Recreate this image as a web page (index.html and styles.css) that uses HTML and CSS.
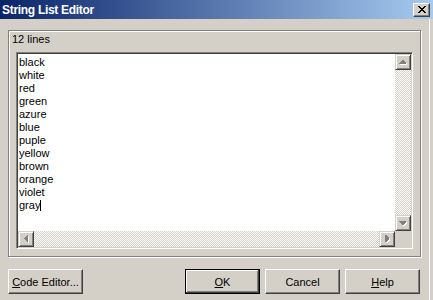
FILE: index.html
```html
<!DOCTYPE html>
<html lang="en">
<head>
  <meta charset="UTF-8">
  <title>String List Editor</title>
  <link rel="stylesheet" href="styles.css">
</head>
<body>
  <div class="window">
    <div class="titlebar">
      <span class="title">String List Editor</span>
      <button class="close" aria-label="Close">
        <svg width="8" height="7" viewBox="0 0 8 7" shape-rendering="crispEdges">
          <path d="M0 0h2l2 2.5 2-2.5h2l-3 3.5 3 3.5h-2l-2-2.5-2 2.5h-2l3-3.5z" fill="#000"/>
        </svg>
      </button>
    </div>

    <div class="client">
      <div class="group">
        <div class="count">12 lines</div>
        <div class="memo">
          <div class="lines">black<br>white<br>red<br>green<br>azure<br>blue<br>puple<br>yellow<br>brown<br>orange<br>violet<br>gray<span class="caret"></span></div>

          <div class="vscroll">
            <div class="sb-btn">
              <svg width="8" height="5" viewBox="0 0 8 5" shape-rendering="crispEdges">
                <path d="M4 1h1l3 3v1h-7v-1z" fill="#fff"/>
                <path d="M3 0h1l3 3v1h-7v-1z" fill="#808080"/>
              </svg>
            </div>
            <div class="track"></div>
            <div class="sb-btn">
              <svg width="8" height="5" viewBox="0 0 8 5" shape-rendering="crispEdges">
                <path d="M1 1h7v1l-3 3h-1l-3-3z" fill="#fff"/>
                <path d="M0 0h7v1l-3 3h-1l-3-3z" fill="#808080"/>
              </svg>
            </div>
          </div>

          <div class="hscroll">
            <div class="sb-btn">
              <svg width="5" height="8" viewBox="0 0 5 8" shape-rendering="crispEdges">
                <path d="M4 1h1v7h-1l-3-3v-1z" fill="#fff"/>
                <path d="M3 0h1v7h-1l-3-3v-1z" fill="#808080"/>
              </svg>
            </div>
            <div class="track"></div>
            <div class="sb-btn">
              <svg width="5" height="8" viewBox="0 0 5 8" shape-rendering="crispEdges">
                <path d="M1 1h1l3 3v1l-3 3h-1z" fill="#fff"/>
                <path d="M0 0h1l3 3v1l-3 3h-1z" fill="#808080"/>
              </svg>
            </div>
          </div>

          <div class="corner"></div>
        </div>
      </div>

      <div class="buttons">
        <button class="btn"><u>C</u>ode Editor...</button>
        <div class="spacer"></div>
        <button class="btn default"><u>O</u>K</button>
        <button class="btn">Cancel</button>
        <button class="btn"><u>H</u>elp</button>
      </div>
    </div>
  </div>
</body>
</html>
```

FILE: styles.css
```css
* {
  margin: 0;
  padding: 0;
  box-sizing: border-box;
}
body {
  background: #d4d0c8;
  font-family: "Liberation Sans", Arial, sans-serif;
  font-size: 11px;
  color: #000;
  overflow: hidden;
}
.window {
  width: 433px;
  height: 300px;
  background: #d4d0c8;
  display: flex;
  flex-direction: column;
}
.titlebar {
  height: 19px;
  background: linear-gradient(90deg, #0a246a, #a6caf0);
  display: flex;
  align-items: center;
  justify-content: space-between;
  padding: 0 3px 0 2px;
}
.title {
  color: #fff;
  font-weight: bold;
  font-size: 12px;
  letter-spacing: -0.3px;
  line-height: 14px;
}
.close {
  width: 17px;
  height: 14px;
  background: #d4d0c8;
  border: 1px solid;
  border-color: #fff #404040 #404040 #fff;
  box-shadow: inset -1px -1px #808080;
  display: flex;
  align-items: center;
  justify-content: center;
}
.close svg {
  display: block;
}
.client {
  flex: 1;
  padding: 11px 0 0 8px;
  border-right: 1px solid #fff;
  margin-right: 3px;
}
.group {
  width: 413px;
  height: 227px;
  border: 1px solid #808080;
  box-shadow: inset 1px 1px #fff, 1px 1px #fff;
  padding: 2px 7px 7px 7px;
}
.count {
  line-height: 13px;
  height: 13px;
  margin: 0 0 6px -4px;
}
.memo {
  width: 397px;
  height: 197px;
  border: 1px solid;
  border-color: #808080 #fff #fff #808080;
  box-shadow: inset 1px 1px #404040, inset -1px -1px #d4d0c8;
  padding: 1px;
  background: #fff;
  display: grid;
  grid-template-columns: 1fr 16px;
  grid-template-rows: 1fr 16px;
}
.lines {
  padding: 2px 0 0 1px;
  line-height: 13px;
  overflow: hidden;
}
.caret {
  display: inline-block;
  width: 1px;
  height: 11px;
  background: #000;
  vertical-align: -2px;
}
.vscroll {
  display: flex;
  flex-direction: column;
}
.hscroll {
  display: flex;
}
.track {
  flex: 1;
  background: conic-gradient(#fff 25%, #d4d0c8 0 50%, #fff 0 75%, #d4d0c8 0);
  background-size: 2px 2px;
}
.sb-btn {
  width: 16px;
  height: 16px;
  flex: none;
  background: #d4d0c8;
  border: 1px solid;
  border-color: #d4d0c8 #404040 #404040 #d4d0c8;
  box-shadow: inset 1px 1px #fff, inset -1px -1px #808080;
  display: flex;
  align-items: center;
  justify-content: center;
}
.sb-btn svg {
  display: block;
}
.corner {
  background: #d4d0c8;
}
.buttons {
  display: flex;
  gap: 5px;
  margin-top: 12px;
  width: 412px;
}
.spacer {
  flex: 1;
}
.btn {
  width: 75px;
  height: 25px;
  background: #d4d0c8;
  font-family: inherit;
  font-size: 11px;
  color: #000;
  border: 1px solid;
  border-color: #fff #404040 #404040 #fff;
  box-shadow: inset -1px -1px #808080;
}
.btn.default {
  border: 1px solid #000;
  box-shadow: inset -1px -1px #404040, inset 1px 1px #fff, inset -2px -2px #808080;
}
.btn u {
  text-decoration: underline;
  text-underline-offset: 1px;
}
```
